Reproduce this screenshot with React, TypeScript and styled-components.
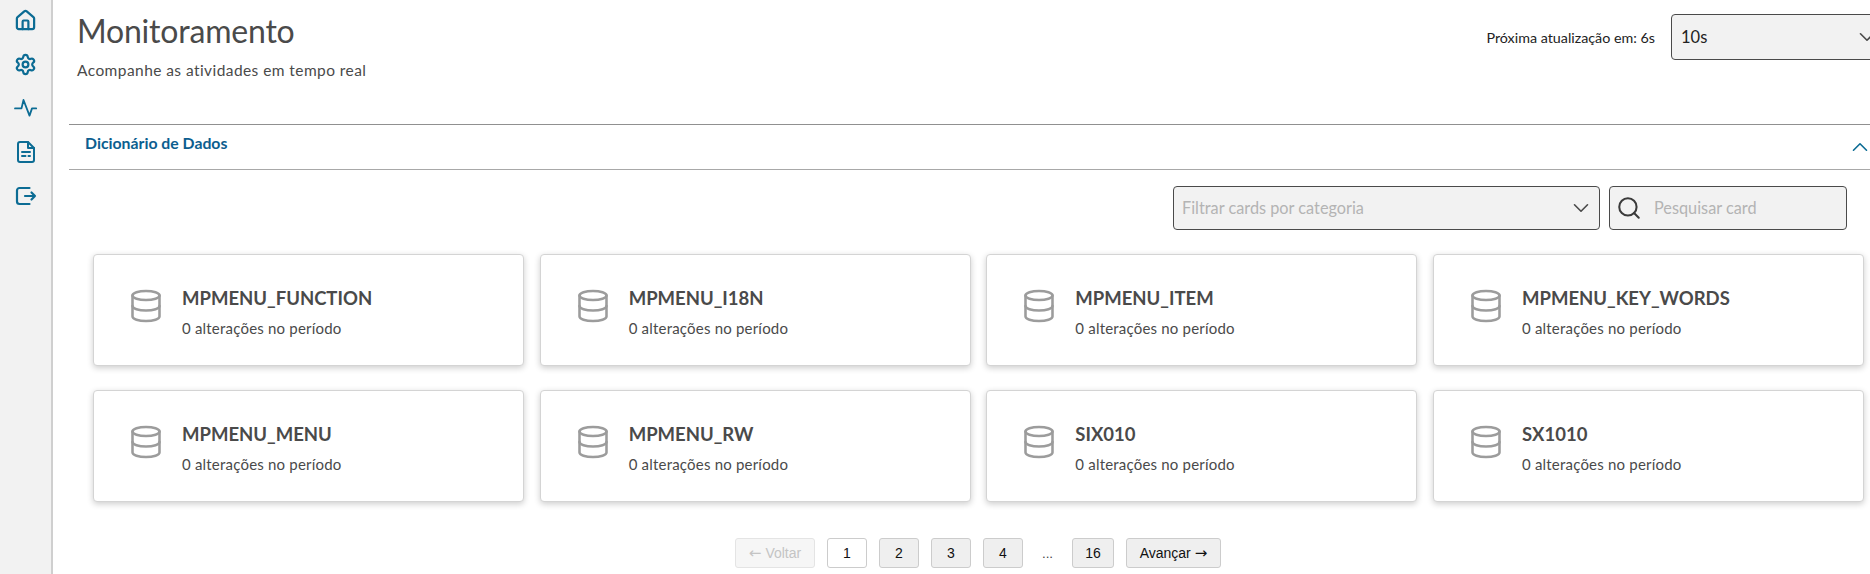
import styled, { createGlobalStyle } from "styled-components";
import { ChevronDown, ChevronUp, Database, House, Search, Settings } from "lucide-react";

const GlobalStyle = createGlobalStyle`
  html, body {
    margin: 0;
    background: #fff;
    overflow: hidden;
  }
  * {
    box-sizing: border-box;
  }
`;

const cards = [
  "MPMENU_FUNCTION",
  "MPMENU_I18N",
  "MPMENU_ITEM",
  "MPMENU_KEY_WORDS",
  "MPMENU_MENU",
  "MPMENU_RW",
  "SIX010",
  "SX1010",
];

const PulseIcon = () => (
  <svg width="24" height="24" viewBox="0 0 24 24" fill="none" stroke="currentColor" strokeWidth="1.8" strokeLinecap="round" strokeLinejoin="round">
    <path d="M1 11.4h6.5L9.5 3l6 15.6 2.5-7.2h4.2" />
  </svg>
);

const ReportIcon = () => (
  <svg width="24" height="24" viewBox="0 0 24 24" fill="none" stroke="currentColor" strokeWidth="2" strokeLinecap="round" strokeLinejoin="round">
    <path d="M14 2H6a2 2 0 0 0-2 2v16a2 2 0 0 0 2 2h12a2 2 0 0 0 2-2V8z" />
    <path d="M14 2v6h6" />
    <path d="M8 12h8M8 16h3.5M14.5 16h1.5" />
  </svg>
);

const ExitIcon = () => (
  <svg width="24" height="24" viewBox="0 0 24 24" fill="none" stroke="currentColor" strokeWidth="2.2" strokeLinecap="round" strokeLinejoin="round">
    <path d="M15.5 4H5.5A2.5 2.5 0 0 0 3 6.5v11A2.5 2.5 0 0 0 5.5 20h10" />
    <path d="M11 12h10M17.5 8.5 21 12l-3.5 3.5" />
  </svg>
);

export default function App() {
  return (
    <Page>
      <GlobalStyle />
      <Sidebar>
        <MenuItem>
          <House size={23} strokeWidth={2.3} />
        </MenuItem>
        <MenuItem>
          <Settings size={23} strokeWidth={2.3} />
        </MenuItem>
        <MenuItem>
          <PulseIcon />
        </MenuItem>
        <MenuItem>
          <ReportIcon />
        </MenuItem>
        <MenuItem>
          <ExitIcon />
        </MenuItem>
      </Sidebar>
      <Main>
        <Header>
          <div>
            <Title>Monitoramento</Title>
            <Subtitle>Acompanhe as atividades em tempo real</Subtitle>
          </div>
          <Refresh>
            <RefreshLabel>Próxima atualização em: 6s</RefreshLabel>
            <IntervalSelect>
              10s
              <ChevronDown size={26} strokeWidth={1.5} color="#4a4a4a" />
            </IntervalSelect>
          </Refresh>
        </Header>
        <Accordion>
          <AccordionTitle>Dicionário de Dados</AccordionTitle>
          <CollapseIcon size={26} strokeWidth={1.5} />
        </Accordion>
        <Filters>
          <CategoryFilter>
            <FilterText>Filtrar cards por categoria</FilterText>
            <ChevronDown size={26} strokeWidth={1.5} color="#4a4a4a" />
          </CategoryFilter>
          <SearchBox>
            <Search size={26} strokeWidth={1.9} color="#3b3b3b" />
            <FilterText>Pesquisar card</FilterText>
          </SearchBox>
        </Filters>
        <CardGrid>
          {cards.map((name) => (
            <Card key={name}>
              <CardIcon size={36} strokeWidth={1.7} />
              <CardText>
                <CardName>{name}</CardName>
                <CardInfo>0 alterações no período</CardInfo>
              </CardText>
            </Card>
          ))}
        </CardGrid>
        <Pagination>
          <PageButton $width={80} $disabled>
            <Arrow>←</Arrow> Voltar
          </PageButton>
          <PageButton $width={40} $active>
            1
          </PageButton>
          <PageButton $width={40}>2</PageButton>
          <PageButton $width={40}>3</PageButton>
          <PageButton $width={40}>4</PageButton>
          <Dots>...</Dots>
          <PageButton $width={42}>16</PageButton>
          <PageButton $width={95}>
            Avançar <Arrow>→</Arrow>
          </PageButton>
        </Pagination>
      </Main>
    </Page>
  );
}

const Page = styled.div`
  display: flex;
  width: 1870px;
  height: 574px;
  overflow: hidden;
  font-family: "Lato", "Open Sans", sans-serif;
  color: #4a4a4a;
`;

const Sidebar = styled.nav`
  flex: 0 0 53px;
  display: flex;
  flex-direction: column;
  padding-top: 9px;
  background: #f2f2f2;
  border-right: 2px solid #cfcfcf;
`;

const MenuItem = styled.div`
  display: flex;
  justify-content: center;
  height: 43.8px;
  color: #0c6c94;
`;

const Main = styled.main`
  flex: 1;
  min-width: 0;
  padding-left: 16px;
`;

const Header = styled.header`
  display: flex;
  justify-content: space-between;
  align-items: flex-start;
  height: 124px;
  padding-left: 8px;
`;

const Title = styled.h1`
  margin: 11px 0 0;
  font-size: 32px;
  line-height: 40px;
  font-weight: 400;
  letter-spacing: -0.2px;
  color: #4a4a4a;
`;

const Subtitle = styled.p`
  margin: 9px 0 0;
  font-size: 15.5px;
  line-height: 20px;
  letter-spacing: 0.43px;
  color: #4a4a4a;
`;

const Refresh = styled.div`
  display: flex;
  align-items: center;
  gap: 16px;
  margin-top: 14px;
  margin-right: -11px;
`;

const RefreshLabel = styled.span`
  font-size: 14.3px;
  color: #222;
`;

const IntervalSelect = styled.div`
  display: flex;
  justify-content: space-between;
  align-items: center;
  width: 210px;
  height: 46px;
  padding: 0 0 0 9px;
  background: #f2f2f2;
  border: 1px solid #4a4a4a;
  border-radius: 4px;
  font-size: 16.5px;
  color: #222;
`;

const Accordion = styled.div`
  display: flex;
  justify-content: space-between;
  align-items: center;
  height: 46px;
  padding-left: 16px;
  border-top: 1px solid #909090;
  border-bottom: 1px solid #a8a8a8;
`;

const AccordionTitle = styled.span`
  font-size: 15.8px;
  font-weight: 700;
  color: #0c5e8f;
  margin-top: -9px;
`;

const CollapseIcon = styled(ChevronUp)`
  margin-right: -3px;
  color: #0c6c94;
`;

const Filters = styled.div`
  display: flex;
  justify-content: flex-end;
  gap: 9px;
  margin-top: 16px;
  padding-right: 23px;
`;

const FilterBox = styled.div`
  display: flex;
  align-items: center;
  height: 44px;
  background: #f2f2f2;
  border: 1px solid #4a4a4a;
  border-radius: 4px;
  font-size: 16.3px;
  color: #b4b4b4;
`;

const FilterText = styled.span`
  margin-top: -2px;
`;

const CategoryFilter = styled(FilterBox)`
  justify-content: space-between;
  width: 427px;
  padding: 0 5px 0 8px;
`;

const SearchBox = styled(FilterBox)`
  gap: 12px;
  width: 238px;
  padding-left: 6px;
`;

const CardGrid = styled.section`
  display: grid;
  grid-template-columns: repeat(4, 431px);
  grid-auto-rows: 112px;
  gap: 24px 15.67px;
  margin-top: 24px;
  padding-left: 24px;
`;

const Card = styled.article`
  display: flex;
  align-items: center;
  gap: 18px;
  padding-left: 34px;
  background: #fff;
  border: 1px solid #d4d4d4;
  border-radius: 4px;
  box-shadow: 0 2px 6px rgba(0, 0, 0, 0.2);
`;

const CardIcon = styled(Database)`
  margin-bottom: 8px;
  color: #9c9c9c;
`;

const CardText = styled.div`
  margin-top: 2px;
`;

const CardName = styled.div`
  font-size: 18.5px;
  line-height: 24px;
  font-weight: 700;
  color: #4a4a4a;
`;

const CardInfo = styled.div`
  margin-top: 9px;
  font-size: 15px;
  line-height: 18px;
  letter-spacing: 0.2px;
  color: #4a4a4a;
`;

const Pagination = styled.div`
  display: flex;
  align-items: center;
  gap: 12px;
  margin-top: 36px;
  padding-left: 666px;
  font-family: "Liberation Sans", Arial, sans-serif;
`;

const PageButton = styled.div<{ $width: number; $active?: boolean; $disabled?: boolean }>`
  display: flex;
  justify-content: center;
  align-items: center;
  gap: 4px;
  width: ${(p) => p.$width}px;
  height: 30px;
  font-size: 14px;
  border-radius: 3px;
  border: 1px solid ${(p) => (p.$disabled ? "#e4e4e4" : "#cccccc")};
  background: ${(p) => (p.$active ? "#fff" : p.$disabled ? "#f6f6f6" : "#efefef")};
  color: ${(p) => (p.$disabled ? "#c4c4c4" : "#111")};
`;

const Arrow = styled.span`
  font-family: "DejaVu Sans", sans-serif;
  font-size: 15px;
`;

const Dots = styled.span`
  width: 25px;
  text-align: center;
  font-size: 13.33px;
  color: #444;
`;
